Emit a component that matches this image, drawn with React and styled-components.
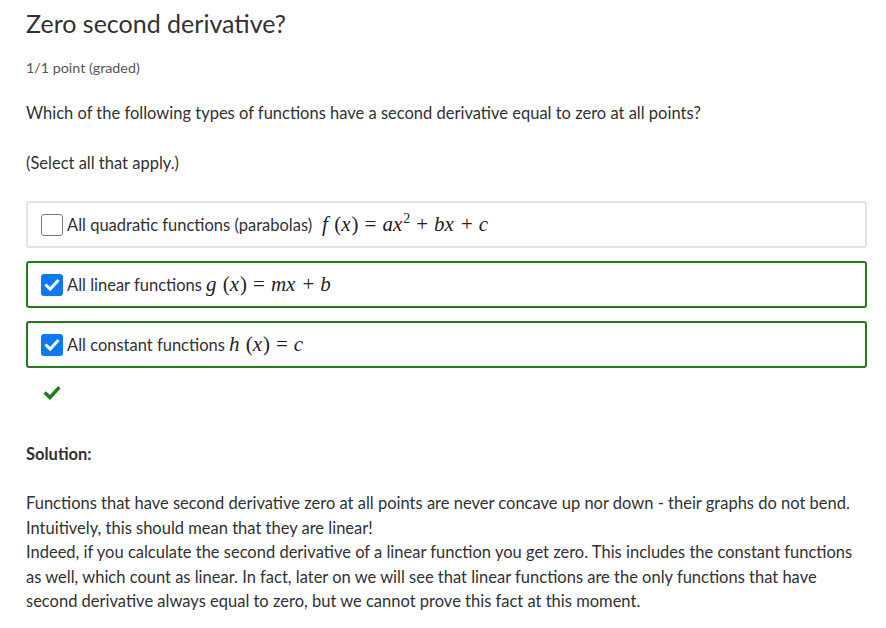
import React from "react";
import styled, { createGlobalStyle } from "styled-components";

const GlobalStyle = createGlobalStyle`
  body {
    margin: 0;
    background: #fff;
    font-family: "Lato", "Open Sans", sans-serif;
    color: #454545;
  }
`;

const Page = styled.div`
  padding: 4px 19px 0 26px;
  width: 886px;
  box-sizing: border-box;
`;

const Title = styled.h2`
  margin: 0;
  font-size: 25px;
  font-weight: 400;
  color: #313131;
  line-height: 38px;
`;

const Points = styled.div`
  margin-top: 17px;
  font-size: 14.3px;
  color: #555;
`;

const Question = styled.p`
  margin: 25px 0 0;
  font-size: 16.5px;
  color: #313131;
  line-height: 24px;
`;

const Hint = styled.p`
  margin: 26px 0 0;
  font-size: 16.5px;
  color: #313131;
  line-height: 24px;
`;

const Options = styled.div`
  margin-top: 26px;
  display: flex;
  flex-direction: column;
  gap: 13px;
`;

const Option = styled.label`
  display: flex;
  align-items: center;
  height: 47px;
  box-sizing: border-box;
  border: 2px solid ${(p) => (p.$correct ? "#237b1b" : "#e4e4e4")};
  border-radius: 3px;
  padding: 0 0 0 13px;
  font-size: 16.5px;
  color: #313131;
`;

const Box = styled.span`
  width: 22px;
  height: 22px;
  box-sizing: border-box;
  border-radius: 3px;
  margin-right: 4px;
  flex-shrink: 0;
  display: flex;
  align-items: center;
  justify-content: center;
  border: ${(p) => (p.$checked ? "none" : "1.5px solid #767676")};
  background: ${(p) => (p.$checked ? "#0b79f5" : "#fff")};
`;

const Math = styled.span`
  font-family: "Liberation Serif", "DejaVu Serif", serif;
  font-size: 21px;
  margin-left: ${(p) => p.$gap || 4}px;
  white-space: nowrap;
  color: #222;
`;

const V = styled.i`
  margin-right: 1px;
`;

const Op = styled.span`
  margin: 0 6px;
`;

const Sup = styled.sup`
  font-size: 14px;
  line-height: 0;
`;

const Status = styled.div`
  margin: 16px 0 0 17px;
  height: 20px;
`;

const SolutionHead = styled.div`
  margin-top: 40px;
  font-size: 16.5px;
  font-weight: 700;
  color: #313131;
`;

const SolutionText = styled.p`
  margin: 27px 0 0;
  font-size: 16.5px;
  line-height: 24.5px;
  color: #313131;
`;

const Tick = ({ color = "#fff", size = 16 }) => (
  <svg width={size} height={size} viewBox="0 0 16 16">
    <path d="M2.5 8.5 L6.2 12 L13.5 4" fill="none" stroke={color} strokeWidth="3" strokeLinecap="square" />
  </svg>
);

const Fx = ({ name }) => (
  <>
    <V>{name}</V>
    <span> (</span>
    <V>x</V>
    <span>)</span>
    <Op>=</Op>
  </>
);

export default function App() {
  return (
    <Page>
      <GlobalStyle />
      <Title>Zero second derivative?</Title>
      <Points>1/1 point (graded)</Points>
      <Question>
        Which of the following types of functions have a second derivative equal to zero at all points?
      </Question>
      <Hint>(Select all that apply.)</Hint>
      <Options>
        <Option>
          <Box />
          All quadratic functions (parabolas)
          <Math $gap={10}>
            <Fx name="f" />
            <V>ax</V>
            <Sup>2</Sup>
            <Op>+</Op>
            <V>bx</V>
            <Op>+</Op>
            <V>c</V>
          </Math>
        </Option>
        <Option $correct>
          <Box $checked>
            <Tick />
          </Box>
          All linear functions
          <Math>
            <Fx name="g" />
            <V>mx</V>
            <Op>+</Op>
            <V>b</V>
          </Math>
        </Option>
        <Option $correct>
          <Box $checked>
            <Tick />
          </Box>
          All constant functions
          <Math>
            <Fx name="h" />
            <V>c</V>
          </Math>
        </Option>
      </Options>
      <Status>
        <Tick color="#237b1b" size={18} />
      </Status>
      <SolutionHead>Solution:</SolutionHead>
      <SolutionText>
        Functions that have second derivative zero at all points are never concave up nor down - their graphs do not bend.
        <br />
        Intuitively, this should mean that they are linear!
        <br />
        Indeed, if you calculate the second derivative of a linear function you get zero. This includes the constant functions
        as well, which count as linear. In fact, later on we will see that linear functions are the only functions that have
        second derivative always equal to zero, but we cannot prove this fact at this moment.
      </SolutionText>
    </Page>
  );
}
